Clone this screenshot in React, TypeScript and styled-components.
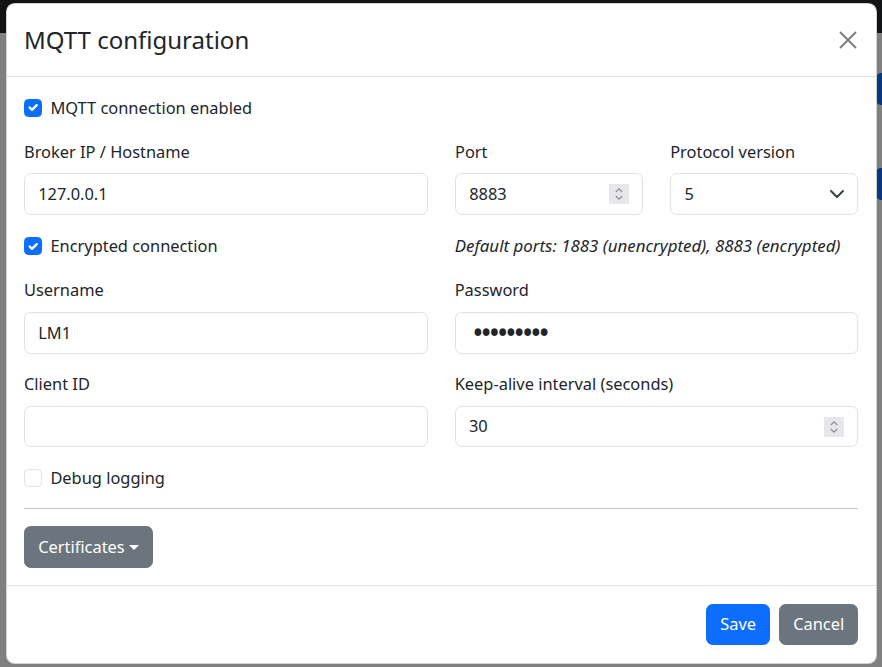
import React from "react";
import styled, { createGlobalStyle, css } from "styled-components";

const GlobalStyle = createGlobalStyle`
  html, body { margin: 0; padding: 0; }
  body {
    font-family: "Noto Sans", "Segoe UI", sans-serif;
    font-size: 16.4px;
    line-height: 26.4px;
    color: #212529;
    background: #808080;
  }
  *, *::before, *::after { box-sizing: border-box; }
`;

const Page = styled.div`
  position: relative;
  width: 882px;
  height: 667px;
  overflow: hidden;
  background: #808080;
`;

const UnderNav = styled.div`
  height: 33px;
  background: #111315;
`;

const UnderSide = styled.div`
  display: flex;
  flex-direction: column;
  align-items: flex-end;
  gap: 63px;
  padding-top: 40px;
`;

const UnderButton = styled.div`
  width: 40px;
  height: 32px;
  margin-right: -34px;
  border-radius: 5px;
  background: #06377f;
`;

const Overlay = styled.div`
  position: absolute;
  inset: 0;
  padding: 3px 0 0 6px;
`;

const Dialog = styled.div`
  width: 871px;
  height: 661px;
  display: flex;
  flex-direction: column;
  background: #fff;
  border: 1px solid rgba(0, 0, 0, 0.175);
  border-radius: 8.8px;
  overflow: hidden;
`;

const Header = styled.div`
  display: flex;
  align-items: center;
  justify-content: space-between;
  padding: 17.6px 17.6px 17.6px 17px;
  border-bottom: 1px solid #dee2e6;
`;

const Title = styled.h4`
  margin: 0;
  font-size: 24px;
  font-weight: 400;
  line-height: 36.8px;
`;

const CloseButton = styled.button`
  display: flex;
  align-items: center;
  justify-content: center;
  width: 20px;
  height: 20px;
  padding: 0;
  border: 0;
  background: transparent;
  color: #000;
  opacity: 0.5;
  cursor: pointer;
`;

const Body = styled.div`
  flex: 1;
  padding: 17.6px 17.6px 17px 17px;
`;

const FormRow = styled.div<{ $cols?: string; $center?: boolean; $tall?: boolean }>`
  display: grid;
  grid-template-columns: ${(p) => p.$cols ?? "minmax(0, 1fr) minmax(0, 1fr)"};
  column-gap: 27px;
  align-items: ${(p) => (p.$center ? "center" : "start")};
  min-height: ${(p) => (p.$tall ? "27.4px" : "0")};
  margin-bottom: 17.6px;
`;

const Field = styled.div`
  display: flex;
  flex-direction: column;
  min-width: 0;
`;

const Label = styled.label`
  display: block;
  margin-bottom: 8.2px;
  line-height: 26.4px;
  white-space: nowrap;
`;

const controlStyles = css`
  width: 100%;
  height: 41.6px;
  padding: 6.6px 13.2px;
  font-family: inherit;
  font-size: 16.4px;
  line-height: 26.4px;
  color: #212529;
  background: #fff;
  border: 1px solid #dee2e6;
  border-radius: 6.6px;
`;

const Control = styled.input`
  ${controlStyles};
  outline: none;
`;

const PasswordControl = styled.input`
  ${controlStyles};
  outline: none;
  font-size: 30px;
  letter-spacing: -3px;
  padding-left: 16.5px;
`;

const ControlGroup = styled.div`
  ${controlStyles};
  display: flex;
  align-items: center;
  justify-content: space-between;
`;

const BareInput = styled.input`
  flex: 1;
  width: 0;
  min-width: 0;
  padding: 0;
  border: 0;
  outline: none;
  font: inherit;
  color: inherit;
  background: transparent;
`;

const Spinner = styled.span`
  display: flex;
  flex: none;
  width: 20px;
  height: 20px;
  background: #e7e7eb;
`;

const CheckRow = styled.div`
  display: flex;
  align-items: center;
  gap: 8.8px;
  min-height: 26.4px;
`;

const CheckBox = styled.span<{ $checked?: boolean }>`
  display: flex;
  flex: none;
  align-items: center;
  justify-content: center;
  width: 17.6px;
  height: 17.6px;
  border-radius: 4.4px;
  border: 1px solid ${(p) => (p.$checked ? "#0d6efd" : "#dee2e6")};
  background: ${(p) => (p.$checked ? "#0d6efd" : "#fff")};
`;

const HelpText = styled.p`
  margin: 0;
  font-style: italic;
  font-size: 16.9px;
  line-height: 26.4px;
  white-space: nowrap;
`;

const Divider = styled.hr`
  margin: 16.4px 0 17.6px;
  border: 0;
  border-top: 1px solid rgba(0, 0, 0, 0.22);
`;

const Button = styled.button<{ $variant: "primary" | "secondary" }>`
  display: inline-flex;
  align-items: center;
  height: 41.6px;
  padding: 6.6px 13.2px;
  font-family: inherit;
  font-size: 16.4px;
  line-height: 26.4px;
  color: #fff;
  border-radius: 6.6px;
  border: 1px solid ${(p) => (p.$variant === "primary" ? "#0d6efd" : "#6c757d")};
  background: ${(p) => (p.$variant === "primary" ? "#0d6efd" : "#6c757d")};
  cursor: pointer;
`;

const Caret = styled.span`
  display: inline-block;
  margin-left: 4px;
  border-top: 5px solid #fff;
  border-left: 5px solid transparent;
  border-right: 5px solid transparent;
`;

const Footer = styled.div`
  display: flex;
  justify-content: flex-end;
  gap: 8.8px;
  padding: 17.6px;
  border-top: 1px solid #dee2e6;
`;

const Check = ({ checked }: { checked?: boolean }) => (
  <CheckBox $checked={checked}>
    {checked && (
      <svg width="17" height="17" viewBox="0 0 20 20">
        <path d="M6 10l3 3 6-6" fill="none" stroke="#fff" strokeWidth="3" strokeLinecap="round" strokeLinejoin="round" />
      </svg>
    )}
  </CheckBox>
);

const SpinIcon = () => (
  <Spinner>
    <svg width="20" height="20" viewBox="0 0 20 20">
      <path d="M6.8 8 L10 4.8 L13.2 8" fill="none" stroke="#8f8f95" strokeWidth="1.2" />
      <path d="M6.8 12 L10 15.2 L13.2 12" fill="none" stroke="#8f8f95" strokeWidth="1.2" />
    </svg>
  </Spinner>
);

export default function App() {
  return (
    <Page>
      <GlobalStyle />
      <UnderNav />
      <UnderSide>
        <UnderButton />
        <UnderButton />
      </UnderSide>
      <Overlay>
        <Dialog role="dialog">
          <Header>
            <Title>MQTT configuration</Title>
            <CloseButton aria-label="Close">
              <svg width="18" height="18" viewBox="0 0 18 18">
                <path d="M1 1 L17 17 M17 1 L1 17" stroke="currentColor" strokeWidth="2" />
              </svg>
            </CloseButton>
          </Header>
          <Body>
            <FormRow $cols="1fr">
              <CheckRow>
                <Check checked />
                <span>MQTT connection enabled</span>
              </CheckRow>
            </FormRow>
            <FormRow $cols="404px minmax(0, 1fr) minmax(0, 1fr)">
              <Field>
                <Label>Broker IP / Hostname</Label>
                <Control defaultValue="127.0.0.1" />
              </Field>
              <Field>
                <Label>Port</Label>
                <ControlGroup>
                  <BareInput defaultValue="8883" />
                  <SpinIcon />
                </ControlGroup>
              </Field>
              <Field>
                <Label>Protocol version</Label>
                <ControlGroup>
                  <span>5</span>
                  <svg width="14" height="8" viewBox="0 0 14 8">
                    <path d="M1 1l6 6 6-6" fill="none" stroke="#343a40" strokeWidth="1.8" strokeLinecap="round" strokeLinejoin="round" />
                  </svg>
                </ControlGroup>
              </Field>
            </FormRow>
            <FormRow $center $tall>
              <CheckRow>
                <Check checked />
                <span>Encrypted connection</span>
              </CheckRow>
              <HelpText>Default ports: 1883 (unencrypted), 8883 (encrypted)</HelpText>
            </FormRow>
            <FormRow>
              <Field>
                <Label>Username</Label>
                <Control defaultValue="LM1" />
              </Field>
              <Field>
                <Label>Password</Label>
                <PasswordControl type="password" defaultValue="123456789" />
              </Field>
            </FormRow>
            <FormRow>
              <Field>
                <Label>Client ID</Label>
                <Control defaultValue="" />
              </Field>
              <Field>
                <Label>Keep-alive interval (seconds)</Label>
                <ControlGroup>
                  <BareInput defaultValue="30" />
                  <SpinIcon />
                </ControlGroup>
              </Field>
            </FormRow>
            <CheckRow>
              <Check />
              <span>Debug logging</span>
            </CheckRow>
            <Divider />
            <Button $variant="secondary">
              Certificates
              <Caret />
            </Button>
          </Body>
          <Footer>
            <Button $variant="primary">Save</Button>
            <Button $variant="secondary">Cancel</Button>
          </Footer>
        </Dialog>
      </Overlay>
    </Page>
  );
}
